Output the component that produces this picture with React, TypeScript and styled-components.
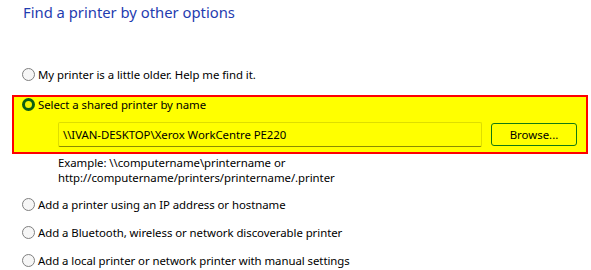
import React from "react";
import styled, { createGlobalStyle } from "styled-components";

const Global = createGlobalStyle`
  html, body { margin: 0; padding: 0; background: #ffffff; }
  body { font-family: "Noto Sans", "Open Sans", sans-serif; color: #000; }
`;

const Page = styled.div`
  width: 591px;
  height: 270px;
  overflow: hidden;
  display: flex;
  flex-direction: column;
`;

const Title = styled.h1`
  margin: 1px 0 0 0;
  padding-left: 23px;
  height: 22px;
  font-size: 14.8px;
  line-height: 22px;
  font-weight: 400;
  color: #1f3cb0;
`;

const Row = styled.label<{ $top: number }>`
  display: flex;
  align-items: center;
  gap: 3px;
  height: 20px;
  margin-top: ${(p) => p.$top}px;
  padding-left: 22px;
  font-size: 11.4px;
  letter-spacing: -0.05px;
  white-space: nowrap;
`;

const Radio = styled.span<{ $checked?: boolean }>`
  box-sizing: border-box;
  width: 13px;
  height: 13px;
  border-radius: 50%;
  flex: none;
  ${(p) =>
    p.$checked
      ? `border: 3.5px solid #0d5f12; background: #f4f400;`
      : `border: 1px solid #7f7f7f; background: #f6f6f6;`}
`;

const Highlight = styled.div`
  box-sizing: border-box;
  margin: 10px 0 0 12px;
  width: 576px;
  height: 59px;
  border: 2px solid #ff0000;
  background: #ffff00;
  display: flex;
  flex-direction: column;
  padding: 0 9px 5px 8px;
`;

const InnerRow = styled.div`
  display: flex;
  align-items: center;
  gap: 3px;
  height: 16px;
  font-size: 11.4px;
  letter-spacing: -0.05px;
  white-space: nowrap;
`;

const InputRow = styled.div`
  display: flex;
  align-items: center;
  gap: 9px;
  margin: 9px 0 0 36px;
`;

const PathInput = styled.div`
  box-sizing: border-box;
  width: 424px;
  height: 25px;
  border: 1px solid #dede00;
  border-bottom-color: #8c8c00;
  border-radius: 2px;
  padding-left: 4px;
  display: flex;
  align-items: center;
  font-size: 11.4px;
  letter-spacing: -0.05px;
  white-space: nowrap;
`;

const Button = styled.div`
  box-sizing: border-box;
  width: 86px;
  height: 23px;
  border: 1px solid #127a12;
  border-radius: 3px;
  display: flex;
  align-items: center;
  justify-content: center;
  font-size: 11.4px;
`;

const Example = styled.div`
  margin: 1px 0 0 58px;
  font-size: 11.4px;
  letter-spacing: -0.05px;
  line-height: 15px;
`;

export default function App() {
  return (
    <Page>
      <Global />
      <Title>Find a printer by other options</Title>
      <Row $top={42}>
        <Radio />
        My printer is a little older. Help me find it.
      </Row>
      <Highlight>
        <InnerRow>
          <Radio $checked />
          Select a shared printer by name
        </InnerRow>
        <InputRow>
          <PathInput>\\IVAN-DESKTOP\Xerox WorkCentre PE220</PathInput>
          <Button>Browse...</Button>
        </InputRow>
      </Highlight>
      <Example>
        Example: \\computername\printername or
        <br />
        http://computername/printers/printername/.printer
      </Example>
      <Row $top={10}>
        <Radio />
        Add a printer using an IP address or hostname
      </Row>
      <Row $top={8}>
        <Radio />
        Add a Bluetooth, wireless or network discoverable printer
      </Row>
      <Row $top={8}>
        <Radio />
        Add a local printer or network printer with manual settings
      </Row>
    </Page>
  );
}
